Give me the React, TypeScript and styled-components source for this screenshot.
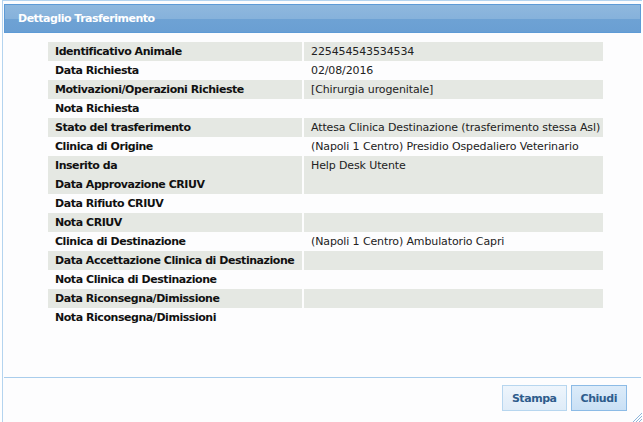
import styled, { createGlobalStyle } from "styled-components";

const GlobalStyle = createGlobalStyle`
  html, body {
    margin: 0;
    padding: 0;
    background: #ffffff;
  }
  body {
    font-family: "DejaVu Sans", Verdana, sans-serif;
    font-size: 11px;
  }
`;

interface riga {
  label: string;
  value: string;
  grigia: boolean;
}

const righe: riga[] = [
  { label: "Identificativo Animale", value: "225454543534534", grigia: true },
  { label: "Data Richiesta", value: "02/08/2016", grigia: false },
  { label: "Motivazioni/Operazioni Richieste", value: "[Chirurgia urogenitale]", grigia: true },
  { label: "Nota Richiesta", value: "", grigia: false },
  { label: "Stato del trasferimento", value: "Attesa Clinica Destinazione (trasferimento stessa Asl)", grigia: true },
  { label: "Clinica di Origine", value: "(Napoli 1 Centro) Presidio Ospedaliero Veterinario", grigia: false },
  { label: "Inserito da", value: "Help Desk Utente", grigia: true },
  { label: "Data Approvazione CRIUV", value: "", grigia: true },
  { label: "Data Rifiuto CRIUV", value: "", grigia: false },
  { label: "Nota CRIUV", value: "", grigia: true },
  { label: "Clinica di Destinazione", value: "(Napoli 1 Centro) Ambulatorio Capri", grigia: false },
  { label: "Data Accettazione Clinica di Destinazione", value: "", grigia: true },
  { label: "Nota Clinica di Destinazione", value: "", grigia: false },
  { label: "Data Riconsegna/Dimissione", value: "", grigia: true },
  { label: "Nota Riconsegna/Dimissioni", value: "", grigia: false },
];

function App() {
  return (
    <>
      <GlobalStyle />
      <Dialog>
        <TitleBar>Dettaglio Trasferimento</TitleBar>
        <Content>
          <DetailTable>
            <tbody>
              {righe.map((r) => (
                <Row key={r.label} $striped={r.grigia}>
                  <LabelCell>{r.label}</LabelCell>
                  <ValueCell>{r.value}</ValueCell>
                </Row>
              ))}
            </tbody>
          </DetailTable>
        </Content>
        <ButtonPane>
          <Button>Stampa</Button>
          <Button $active>Chiudi</Button>
        </ButtonPane>
        <Grip width="10" height="10" viewBox="0 0 10 10">
          <path d="M10 1 L1 10 M10 4 L4 10 M10 7 L7 10" stroke="#8fb6da" strokeWidth="1" />
        </Grip>
      </Dialog>
    </>
  );
}

const Dialog = styled.div`
  position: relative;
  box-sizing: border-box;
  width: 640px;
  height: 422px;
  margin-left: 2px;
  padding: 3px 1px 0 1px;
  border-left: 1px solid #b4d4ef;
  border-top: 1px solid #b4d4ef;
  background: #fdfdfe;
  display: flex;
  flex-direction: column;
`;

const TitleBar = styled.div`
  box-sizing: border-box;
  height: 29px;
  padding: 0 0 0 13px;
  border: 1px solid #5e9bd6;
  background: linear-gradient(#8fb8de 0%, #86b2db 50%, #6ea2d4 52%, #6a9fd3 100%);
  color: #ffffff;
  font-weight: bold;
  font-size: 11px;
  letter-spacing: -0.5px;
  line-height: 27px;
`;

const Content = styled.div`
  flex: 1;
  padding: 9px 0 0 44px;
`;

const DetailTable = styled.table`
  border-collapse: separate;
  border-spacing: 2px 0;
  margin-left: -2px;
  table-layout: fixed;
  width: 559px;
`;

const Row = styled.tr<{ $striped: boolean }>`
  height: 19px;
  td {
    background: ${(p) => (p.$striped ? "#e5e8e3" : "transparent")};
  }
`;

const LabelCell = styled.td`
  width: 247px;
  padding: 0 0 0 7px;
  font-weight: bold;
  letter-spacing: -0.45px;
  color: #111111;
  white-space: nowrap;
  overflow: hidden;
`;

const ValueCell = styled.td`
  padding: 0 0 0 7px;
  color: #222222;
  letter-spacing: -0.12px;
  white-space: nowrap;
  overflow: hidden;
`;

const ButtonPane = styled.div`
  height: 45px;
  border-top: 1px solid #a9cdec;
  display: flex;
  justify-content: flex-end;
  align-items: flex-start;
  gap: 4px;
  padding: 7px 14px 0 0;
  box-sizing: border-box;
`;

const Button = styled.button<{ $active?: boolean }>`
  height: 26px;
  padding: 0 9px;
  border: 1px solid ${(p) => (p.$active ? "#8cbbe6" : "#b7d6ef")};
  background: ${(p) =>
    p.$active
      ? "linear-gradient(#dcebf9 0%, #d3e6f7 50%, #c9e0f5 100%)"
      : "linear-gradient(#eef5fc 0%, #e6f0fa 50%, #dfecf8 100%)"};
  color: #2e5c8c;
  font-family: "DejaVu Sans", Verdana, sans-serif;
  font-size: 11px;
  font-weight: bold;
  letter-spacing: -0.45px;
  cursor: pointer;
`;

const Grip = styled.svg`
  position: absolute;
  right: 0;
  bottom: 0;
`;

export default App;
